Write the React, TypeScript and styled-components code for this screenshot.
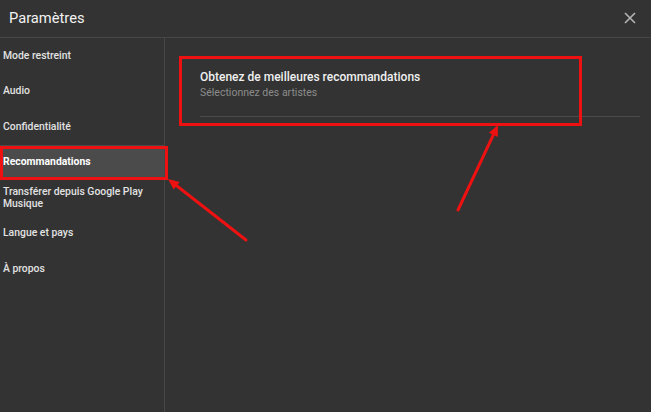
import React from "react";
import styled, { createGlobalStyle } from "styled-components";

const Global = createGlobalStyle`
  html, body { margin: 0; padding: 0; background: #333333; }
  body { font-family: Roboto, "Noto Sans", "Liberation Sans", sans-serif; }
  * { box-sizing: border-box; }
`;

const Page = styled.div`
  position: relative;
  width: 651px;
  height: 412px;
  background: #333333;
  color: #fff;
  display: flex;
  flex-direction: column;
  overflow: hidden;
`;

const Header = styled.header`
  height: 38px;
  flex: none;
  display: flex;
  align-items: center;
  justify-content: space-between;
  padding: 0 14px 2px 9px;
  border-bottom: 1px solid #464646;
`;

const Title = styled.h1`
  margin: 0;
  font-size: 14.7px;
  font-weight: 400;
  color: #f2f2f2;
`;

const CloseButton = styled.button`
  width: 14px;
  height: 14px;
  padding: 0;
  border: none;
  background: transparent;
  display: flex;
  align-items: center;
  justify-content: center;
  margin-top: 1px;
`;

const Body = styled.div`
  flex: 1;
  display: flex;
`;

const Sidebar = styled.nav`
  width: 165px;
  flex: none;
  border-right: 1px solid #474747;
  display: flex;
  flex-direction: column;
`;

const NavItem = styled.div<{ $active?: boolean }>`
  height: 35.5px;
  display: flex;
  align-items: center;
  padding: 0 6px 0 3px;
  font-size: 10.4px;
  line-height: 12px;
  font-weight: ${(p) => (p.$active ? 700 : 500)};
  color: ${(p) => (p.$active ? "#ffffff" : "#e2e2e2")};
  background: ${(p) => (p.$active ? "#4b4b4b" : "transparent")};
`;

const Content = styled.main`
  flex: 1;
  padding: 31px 11px 0 35px;
  display: flex;
  flex-direction: column;
`;

const SettingRow = styled.div`
  display: flex;
  flex-direction: column;
  gap: 1px;
  padding-bottom: 16px;
  border-bottom: 1px solid #4a4a4a;
`;

const SettingTitle = styled.div`
  font-size: 12px;
  line-height: 16px;
  font-weight: 500;
  color: #f0f0f0;
`;

const SettingSub = styled.div`
  font-size: 10.5px;
  line-height: 14px;
  font-weight: 400;
  color: #8c8c8c;
`;

const Highlight = styled.div<{ $x: number; $y: number; $w: number; $h: number }>`
  position: absolute;
  left: ${(p) => p.$x}px;
  top: ${(p) => p.$y}px;
  width: ${(p) => p.$w}px;
  height: ${(p) => p.$h}px;
  border: 3px solid #ee1111;
  pointer-events: none;
`;

const Annotations = styled.svg`
  position: absolute;
  inset: 0;
  pointer-events: none;
`;

const navItems = [
  "Mode restreint",
  "Audio",
  "Confidentialité",
  "Recommandations",
  "Transférer depuis Google Play Musique",
  "Langue et pays",
  "À propos",
];

function Arrow({ x1, y1, x2, y2 }: { x1: number; y1: number; x2: number; y2: number }) {
  const ang = Math.atan2(y2 - y1, x2 - x1);
  const len = 12;
  const spread = 0.42;
  const ax = x2 - len * Math.cos(ang - spread);
  const ay = y2 - len * Math.sin(ang - spread);
  const bx = x2 - len * Math.cos(ang + spread);
  const by = y2 - len * Math.sin(ang + spread);
  const mx = x2 - (len - 3) * Math.cos(ang);
  const my = y2 - (len - 3) * Math.sin(ang);
  return (
    <g>
      <line x1={x1} y1={y1} x2={mx} y2={my} stroke="#ee1111" strokeWidth={3} strokeLinecap="round" />
      <polygon points={`${x2},${y2} ${ax},${ay} ${bx},${by}`} fill="#ee1111" />
    </g>
  );
}

export default function App() {
  return (
    <>
      <Global />
      <Page>
        <Header>
          <Title>Paramètres</Title>
          <CloseButton aria-label="Fermer">
            <svg width="12" height="12" viewBox="0 0 12 12">
              <path d="M1 1 L11 11 M11 1 L1 11" stroke="#b5b5b5" strokeWidth="1.6" />
            </svg>
          </CloseButton>
        </Header>
        <Body>
          <Sidebar>
            {navItems.map((label) => (
              <NavItem key={label} $active={label === "Recommandations"}>
                {label}
              </NavItem>
            ))}
          </Sidebar>
          <Content>
            <SettingRow>
              <SettingTitle>Obtenez de meilleures recommandations</SettingTitle>
              <SettingSub>Sélectionnez des artistes</SettingSub>
            </SettingRow>
          </Content>
        </Body>
        <Highlight $x={0} $y={146} $w={168} $h={34} />
        <Highlight $x={179} $y={56} $w={403} $h={70} />
        <Annotations width="651" height="412" viewBox="0 0 651 412">
          <Arrow x1={246} y1={240} x2={168} y2={179} />
          <Arrow x1={458} y1={210} x2={498} y2={125} />
        </Annotations>
      </Page>
    </>
  );
}
